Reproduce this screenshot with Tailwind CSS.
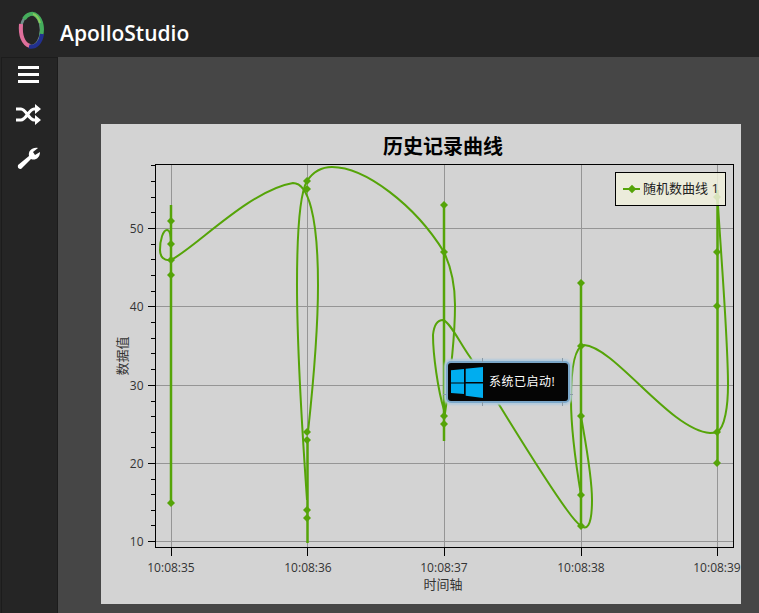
<!DOCTYPE html>
<html lang="en">
<head>
<meta charset="UTF-8">
<title>ApolloStudio</title>
<script src="https://cdn.jsdelivr.net/npm/@tailwindcss/browser@4"></script>
</head>
<body class="w-[759px] h-[613px] overflow-hidden bg-[#252525] font-['Open_Sans','Noto_Sans_CJK_SC',sans-serif]">
<div class="flex flex-col h-[613px]">
  <!-- header -->
  <header class="h-[57px] shrink-0 flex items-center bg-[#252525]">
    <svg class="ml-[18px] mt-[3px]" width="26" height="38" viewBox="0 0 26 38" fill="none">
      <ellipse cx="13" cy="19" rx="10" ry="16" stroke="#6f8f88" stroke-width="2.500"/>
      <path d="M6 8C9 3 15 1 19 5C24 10 25 18 23 25" stroke="#45ad5c" stroke-width="4"/>
      <path d="M15 3C19 4 21 8 22 12" stroke="#86c95a" stroke-width="2"/>
      <path d="M3 13C2 24 5 33 12 35" stroke="#df6f9b" stroke-width="4"/>
      <path d="M11 35.500C18 37 23 31 24 23" stroke="#22308f" stroke-width="4"/>
    </svg>
    <span class="ml-[16px] mt-[11px] text-[21px] font-semibold text-white">ApolloStudio</span>
  </header>
  <div class="flex flex-1 min-h-0">
    <!-- sidebar -->
    <nav class="w-[57px] ml-[1px] shrink-0 flex flex-col items-center border border-b-0 border-[#1c1c1c] bg-[#252525] pt-[8px] pr-[2px] gap-[21px]">
      <svg width="21" height="17" viewBox="0 0 21 17" fill="#fff"><rect y="0" width="21" height="3"/><rect y="7" width="21" height="3"/><rect y="14" width="21" height="3"/></svg>
      <svg width="25" height="21" viewBox="0 0 25 21" fill="none" stroke="#fff" stroke-width="3"><path d="M0 5H5C10 5 13 16 18 16H22M0 16H5C10 16 13 5 18 5H22"/><path d="M19 0L25 5L19 10ZM19 11L25 16L19 21Z" fill="#fff" stroke="none"/></svg>
      <svg width="24" height="24" viewBox="0 0 24 24"><path d="M1 19L12 10C11 5 15 1 21 2L16 6L18 9L23 6C23 12 18 15 14 13L4 23Q0 23 1 19Z" fill="#fff"/></svg>
    </nav>
    <main class="flex-1 bg-[#464646] pt-[67px] pl-[43px]">
      <section class="relative w-[640px] h-[480px] bg-[#d3d3d3]">
        <svg class="absolute inset-0" width="640" height="480" viewBox="101 124 640 480" font-family="'Open Sans','Noto Sans CJK SC',sans-serif">
          <text x="443" y="154" text-anchor="middle" font-size="20" font-weight="700" fill="#000">历史记录曲线</text>
          <g stroke="#959595" stroke-width="1">
            <path d="M171.500 164V547M307.500 164V547M444.500 164V547M581.500 164V547M717.500 164V547"/>
            <path d="M155 228.500H733M155 306.500H733M155 385.500H733M155 463.500H733M155 541.500H733"/>
          </g>
          <rect x="155.500" y="164.500" width="578" height="383" fill="none" stroke="#000"/>
          <path stroke="#000" d="M171.500 548v8M307.500 548v8M444.500 548v8M581.500 548v8M717.500 548v8M148 541.500h7M148 463.500h7M148 385.500h7M148 306.500h7M148 228.500h7M151 525.500h4M151 510.500h4M151 494.500h4M151 479.500h4M151 447.500h4M151 432.500h4M151 416.500h4M151 401.500h4M151 369.500h4M151 353.500h4M151 338.500h4M151 322.500h4M151 291.500h4M151 275.500h4M151 259.500h4M151 244.500h4M151 212.500h4M151 197.500h4M151 181.500h4M151 165.500h4"/>
          <g font-size="12" fill="#333" text-anchor="middle">
            <text x="171" y="572">10:08:35</text><text x="308" y="572">10:08:36</text><text x="444" y="572">10:08:37</text><text x="581" y="572">10:08:38</text><text x="717" y="572">10:08:39</text>
            <text x="443" y="589" font-size="13">时间轴</text>
            <text transform="translate(127 356) rotate(-90)" font-size="13">数据值</text>
          </g>
          <g font-size="12" fill="#333" text-anchor="end">
            <text x="143.500" y="546">10</text><text x="143.500" y="468">20</text><text x="143.500" y="390">30</text><text x="143.500" y="311">40</text><text x="143.500" y="233">50</text>
          </g>
          <g fill="none" stroke="#55a408" stroke-width="2">
            <!-- vertical runs where several samples share one timestamp -->
            <path stroke-width="2.500" d="M171 205V503M307.500 440V543M444 205V441M581 283V526M717.500 190V463"/>
            <path d="M171 244C171 235 170 230 167 230C163 230 160 240 160 250C160 257 164 261 171 260C195 248 250 190 293 183C308 183 318 215 318 285C318 340 312 395 308 432"/>
            <path d="M307 500C303 440 297 360 297 285C297 235 299 195 307 181C313 172 320 167 332 167C365 167 415 205 444 252C450 265 455 285 455 305C455 340 450 380 444 420"/>
            <path d="M444 410C438 390 433 355 433 335C434 325 438 320 443 320C450 322 460 343 470 357C490 390 545 480 567 510C572 517 577 523 581 526C586 530 592 528 592 500C592 475 585 440 581 416"/>
            <path d="M581 495C576 465 571 425 571 400C571 370 574 347 584 345C615 347 670 430 710 433C713 433 715 433 717 432C725 428 728 405 728 385C728 340 722 270 717 190"/>
          </g>
          <g fill="#55a408">
            <path d="M171 217l4 4l-4 4l-4-4zM171 240l4 4l-4 4l-4-4zM171 256l4 4l-4 4l-4-4zM171 271l4 4l-4 4l-4-4zM171 499l4 4l-4 4l-4-4z"/>
            <path d="M307 177l4 4l-4 4l-4-4zM307 185l4 4l-4 4l-4-4zM307 428l4 4l-4 4l-4-4zM307 436l4 4l-4 4l-4-4zM307 506l4 4l-4 4l-4-4zM307 514l4 4l-4 4l-4-4z"/>
            <path d="M444 201l4 4l-4 4l-4-4zM444 248l4 4l-4 4l-4-4zM444 412l4 4l-4 4l-4-4zM444 420l4 4l-4 4l-4-4z"/>
            <path d="M581 279l4 4l-4 4l-4-4zM581 342l4 4l-4 4l-4-4zM581 412l4 4l-4 4l-4-4zM581 491l4 4l-4 4l-4-4zM581 522l4 4l-4 4l-4-4z"/>
            <path d="M717 193l4 4l-4 4l-4-4zM717 248l4 4l-4 4l-4-4zM717 302l4 4l-4 4l-4-4zM717 428l4 4l-4 4l-4-4zM717 459l4 4l-4 4l-4-4z"/>
          </g>
        </svg>
        <!-- legend -->
        <div class="absolute left-[514px] top-[48px] w-[111px] h-[34px] flex items-center gap-[3px] pl-[7px] border border-black bg-[#f0f0dc]/85 text-[13px] text-[#222]">
          <span class="relative w-[17px] h-[2px] bg-[#55a408]"><span class="absolute left-[6px] top-[-2px] w-[6px] h-[6px] rotate-45 bg-[#55a408]"></span></span>
          <span>随机数曲线 1</span>
        </div>
        <!-- toast -->
        <div class="absolute left-[347px] top-[239px] w-[120px] h-[38px] rounded-[3px] bg-[#050505] shadow-[0_0_0_2px_#7ba7c9,0_0_2px_4px_#b4cbdc] flex items-center gap-[6px] pl-[3px] text-[12px] tracking-[0.5px] text-white">
          <span class="absolute left-[34px] top-[-5px] w-px h-[4px] bg-[#8a9aa6]"></span>
          <span class="absolute left-[114px] top-[-5px] w-px h-[4px] bg-[#8a9aa6]"></span>
          <span class="absolute left-[34px] bottom-[-5px] w-px h-[4px] bg-[#8a9aa6]"></span>
          <span class="absolute left-[114px] bottom-[-5px] w-px h-[4px] bg-[#8a9aa6]"></span>
          <span class="absolute left-[-5px] top-[31px] w-[3px] h-px bg-[#8a9aa6]"></span>
          <span class="absolute right-[-5px] top-[31px] w-[3px] h-px bg-[#8a9aa6]"></span>
          <svg width="32" height="31" viewBox="0 0 32 31" fill="#00adef"><path d="M0 3.300L13 2V15.500H0ZM14.700 1.700L32 0V15H14.700ZM0 16.500H13V27L0 26ZM14.700 16.500H32V31L14.700 28.700Z"/></svg>
          <span>系统已启动!</span>
        </div>
      </section>
    </main>
  </div>
</div>
</body>
</html>
